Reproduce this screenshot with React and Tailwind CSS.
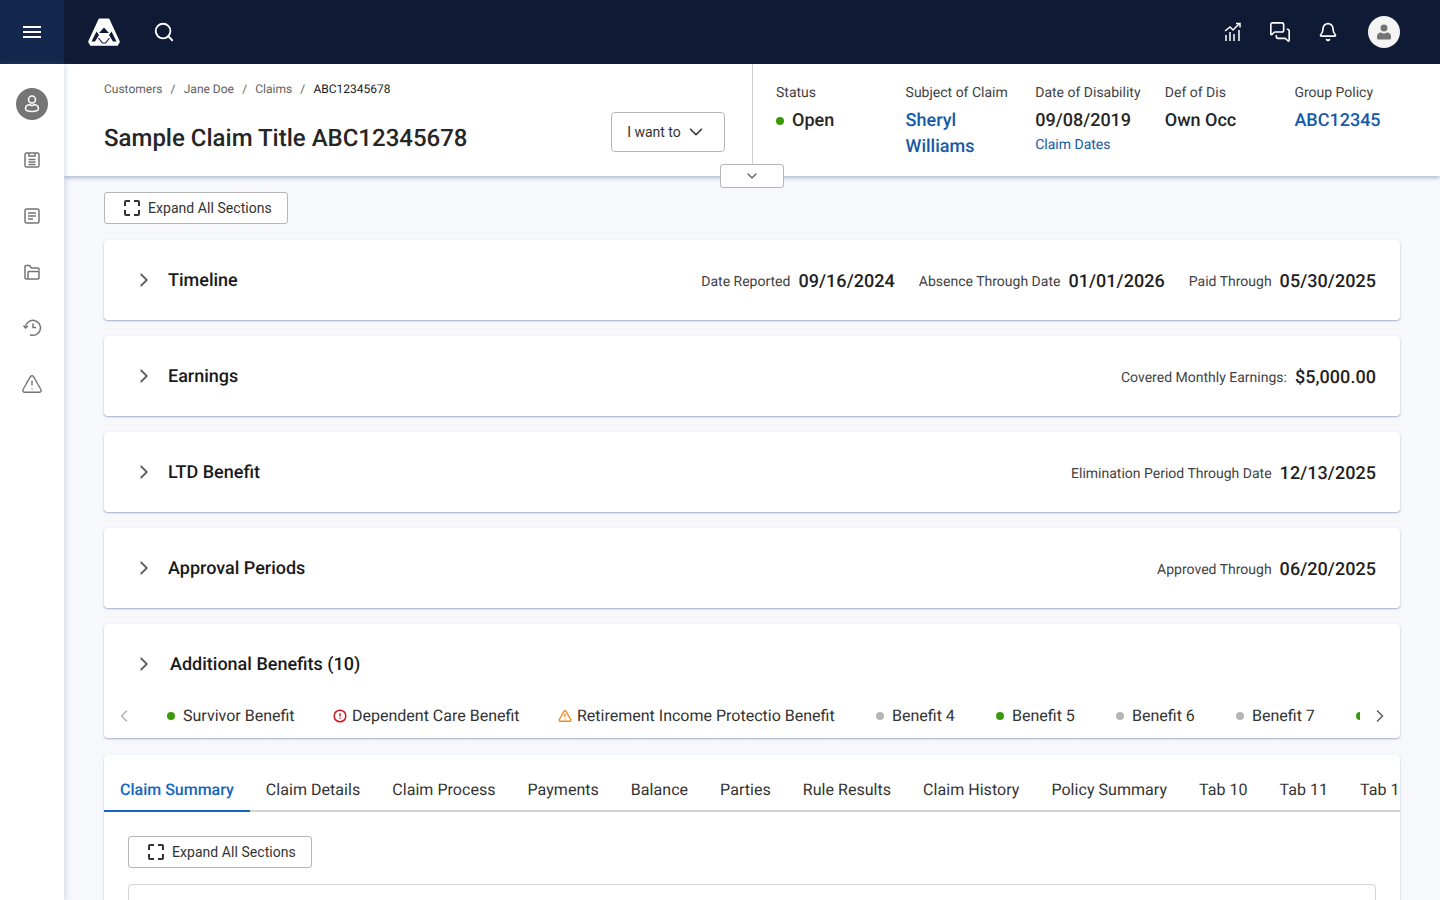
import React from 'react';
import { Search, ChevronRight, ChevronLeft, ChevronDown, MessagesSquare, Bell, TriangleAlert, CircleAlert } from 'lucide-react';

const font = { fontFamily: 'Roboto, sans-serif' };

const Logo = () => (
  <svg width="32" height="28" viewBox="0 0 32 28">
    <path d="M11.500.5h9a1 1 0 0 1 .9.5l10.300 22.300a1 1 0 0 1 0 .9l-1.700 3.100a1 1 0 0 1-.9.5H3a1 1 0 0 1-.9-.5L.3 24.200a1 1 0 0 1 0-.9L10.600 1a1 1 0 0 1 .9-.5z" fill="#fff" />
    <path d="M16 9.500 11 15h10z" fill="#0f1b35" />
    <path d="M8.500 13.500 3.500 23.500H7L11 17z" fill="#0f1b35" />
    <path d="M23.500 13.500 28.500 23.500H25L21 17z" fill="#0f1b35" />
    <path d="M10.500 20l4 5h3l4-5" fill="none" stroke="#0f1b35" strokeWidth="1.200" />
  </svg>
);

const MenuIcon = () => (
  <svg width="24" height="24" viewBox="0 0 24 24" fill="none" stroke="#fff" strokeWidth="2">
    <path d="M3 7h18M3 12h18M3 17h18" />
  </svg>
);

const ChartIcon = () => (
  <svg width="18" height="20" viewBox="0 0 18 20" fill="none" stroke="#fff" strokeWidth="1.5">
    <path d="M1 9l5-4 3 3 6-6" />
    <path d="M12 1.500h4v4" />
    <path d="M2 13v6M6 10v9M10 12v7M15 8v11" />
  </svg>
);

const UserGlyph = () => (
  <svg width="14" height="16" viewBox="0 0 14 16" fill="#757575">
    <circle cx="7" cy="4" r="3.500" />
    <path d="M0 14v-2c0-2 2-3.500 4-3.500.8.700 1.900 1 3 1s2.200-.3 3-1c2 0 4 1.500 4 3.500v2c0 .8-.6 1.500-1.500 1.500h-11C.6 15.500 0 14.800 0 14z" />
  </svg>
);

const ProfileOutline = () => (
  <svg width="16" height="20" viewBox="0 0 16 20" fill="none" stroke="#fff" strokeWidth="1.500">
    <circle cx="8" cy="5.500" r="3.500" />
    <path d="M5.500 10.500C3 11 1.500 12.500 1.500 14.500c0 2 2 3 6.500 3s6.500-1 6.500-3c0-2-1.500-3.500-4-4-.8.800-1.500 1-2.500 1s-1.700-.2-2.500-1z" />
  </svg>
);

const ClipboardIcon = () => (
  <svg width="18" height="18" viewBox="0 0 18 18" fill="none" stroke="#757575" strokeWidth="1.500">
    <rect x="2" y="2" width="14" height="14" rx="1.500" />
    <path d="M6 2v3h6V2M5.500 8.500h7M5.500 11h7M5.500 13.500h7" />
  </svg>
);

const NoteIcon = () => (
  <svg width="18" height="18" viewBox="0 0 18 18" fill="none" stroke="#757575" strokeWidth="1.500">
    <rect x="2" y="2" width="14" height="14" rx="1.500" />
    <path d="M5 6h8M5 9h8M5 12h5" />
  </svg>
);

const FolderIcon = () => (
  <svg width="18" height="16" viewBox="0 0 18 16" fill="none" stroke="#757575" strokeWidth="1.500">
    <path d="M2 14V2.500a1 1 0 0 1 1-1h3.500l2 2.500H15a1 1 0 0 1 1 1v1.500" />
    <path d="M2 14a1 1 0 0 0 1 1h12a1 1 0 0 0 1-1V7.500H6a1 1 0 0 0-1 1V15" />
  </svg>
);

const ClockBackIcon = () => (
  <svg width="20" height="20" viewBox="0 0 20 20" fill="none" stroke="#757575" strokeWidth="1.500">
    <path d="M3.500 9.500A7.500 7.500 0 1 1 8 16.700" />
    <path d="M1.500 7.500l2 2.500 2.500-2" />
    <path d="M11 5.500v4h3" />
  </svg>
);

const ExpandIcon = () => (
  <svg width="18" height="18" viewBox="0 0 18 18" fill="none" stroke="#333" strokeWidth="2">
    <path d="M7 2H3a1 1 0 0 0-1 1v4M11 2h4a1 1 0 0 1 1 1v4M7 16H3a1 1 0 0 1-1-1v-4M11 16h4a1 1 0 0 0 1-1v-4" />
  </svg>
);

const ExpandButton = () => (
  <button className="flex h-8 w-[184px] items-center gap-[7px] rounded-[3px] border border-[#b5b5b5] bg-white pl-[18px] text-sm tracking-[0.05px] text-[#333]">
    <ExpandIcon />
    Expand All Sections
  </button>
);

const Meta = ({ label, value }) => (
  <div className="flex items-center pt-1">
    <span className="text-sm text-[#424242]">{label}</span>
    <span className="ml-[8px] text-lg font-medium tracking-[0.05px] text-[#1f1f1f]">{value}</span>
  </div>
);

const Section = ({ title, meta }) => (
  <div className="flex h-20 items-center rounded bg-white pr-6 pl-[29px] shadow-[0_1px_2px_rgba(90,110,150,0.55)]">
    <ChevronRight size={22} strokeWidth={2} className="text-[#616161]" />
    <h2 className="ml-[13px] pt-px text-lg font-medium text-[#1a1a1a]">{title}</h2>
    <div className="ml-auto flex items-center gap-6">
      {meta.map((m) => (
        <Meta key={m.label} label={m.label} value={m.value} />
      ))}
    </div>
  </div>
);

const Dot = ({ color }) => <span className={`h-2 w-2 rounded-full ${color}`} />;

const benefits = [
  { name: 'Survivor Benefit', icon: <Dot color="bg-[#3b9a0c]" />, w: 'w-[167px]' },
  { name: 'Dependent Care Benefit', icon: <CircleAlert size={14} strokeWidth={2.5} className="-mr-[3px] -ml-px text-[#d8121f]" />, w: 'w-[225px]' },
  { name: 'Retirement Income Protectio Benefit', icon: <TriangleAlert size={14} strokeWidth={2.25} className="-mr-[3px] -ml-px text-[#f08a24]" />, w: 'w-[317px]' },
  { name: 'Benefit 4', icon: <Dot color="bg-[#b5b5b5]" />, w: 'w-[120px]' },
  { name: 'Benefit 5', icon: <Dot color="bg-[#3b9a0c]" />, w: 'w-[120px]' },
  { name: 'Benefit 6', icon: <Dot color="bg-[#b5b5b5]" />, w: 'w-[120px]' },
  { name: 'Benefit 7', icon: <Dot color="bg-[#b5b5b5]" />, w: 'w-[120px]' },
];

const tabs = ['Claim Details', 'Claim Process', 'Payments', 'Balance', 'Parties', 'Rule Results', 'Claim History', 'Policy Summary', 'Tab 10', 'Tab 11', 'Tab 12'];

const railIcons = [<ClipboardIcon />, <NoteIcon />, <FolderIcon />, <ClockBackIcon />, <TriangleAlert size={22} strokeWidth={1.5} className="text-[#757575]" />];

export default function App() {
  return (
    <div style={font} className="flex h-screen w-full flex-col overflow-hidden bg-[#f6f8fc] antialiased [text-rendering:geometricPrecision]">
      <header className="flex h-16 shrink-0 items-center bg-[#0f1b35]">
        <div className="flex h-16 w-16 items-center justify-center bg-[#14274c]">
          <MenuIcon />
        </div>
        <div className="ml-6 flex"><Logo /></div>
        <Search size={22} strokeWidth={2} className="ml-[33px] text-white" />
        <div className="ml-auto flex items-center pr-10">
          <ChartIcon />
          <MessagesSquare size={22} strokeWidth={1.75} className="ml-[27px] text-white" />
          <Bell size={20} strokeWidth={2} className="ml-[27px] text-white" />
          <div className="ml-[30px] flex h-8 w-8 items-center justify-center rounded-full bg-[#f5f5f5]">
            <UserGlyph />
          </div>
        </div>
      </header>

      <div className="flex min-h-0 flex-1">
        <aside className="z-20 flex w-16 shrink-0 flex-col items-center bg-white pt-3 shadow-[1px_0_6px_rgba(90,110,150,0.25)]">
          <div className="flex h-14 items-center">
            <div className="flex h-8 w-8 items-center justify-center rounded-full bg-[#757575]">
              <ProfileOutline />
            </div>
          </div>
          {railIcons.map((icon, i) => (
            <div key={i} className="flex h-14 items-center">{icon}</div>
          ))}
        </aside>

        <main className="min-w-0 flex-1">
          <section className="relative z-10 flex h-28 bg-white shadow-[0_2px_4px_rgba(90,110,150,0.45)]">
            <div className="w-[689px] border-r border-[#cfcfcf] pr-[27px] pl-10">
              <nav className="flex h-12 items-center pt-[2px] text-xs text-[#616161]">
                <span>Customers</span>
                <span className="mx-[8.2px]">/</span>
                <span>Jane Doe</span>
                <span className="mx-[8.2px]">/</span>
                <span>Claims</span>
                <span className="mx-[8.2px]">/</span>
                <span className="text-[#1a1a1a]">ABC12345678</span>
              </nav>
              <div className="flex items-start justify-between">
                <h1 className="mt-[10px] text-2xl font-medium text-[#262626]">Sample Claim Title ABC12345678</h1>
                <button className="flex h-10 w-[114px] items-center justify-center gap-1 rounded border border-[#b5b5b5] pr-[2px] text-sm text-[#333]">
                  I want to
                  <ChevronDown size={22} strokeWidth={1.75} />
                </button>
              </div>
            </div>
            <div className="grid flex-1 grid-cols-5 pt-5 pr-4 pl-[23px]">
              <div>
                <p className="text-sm leading-[18px] text-[#424242]">Status</p>
                <p className="mt-[6px] flex items-center gap-2 text-lg leading-[26px] font-medium text-[#262626]"><Dot color="bg-[#3b9a0c]" />Open</p>
              </div>
              <div>
                <p className="text-sm leading-[18px] text-[#424242]">Subject of Claim</p>
                <p className="mt-[6px] text-lg leading-[26px] font-medium text-[#155aa8]">Sheryl<br />Williams</p>
              </div>
              <div>
                <p className="text-sm leading-[18px] text-[#424242]">Date of Disability</p>
                <p className="mt-[6px] text-lg leading-[26px] font-medium text-[#262626]">09/08/2019</p>
                <p className="mt-px text-sm leading-[20px] text-[#155aa8]">Claim Dates</p>
              </div>
              <div>
                <p className="text-sm leading-[18px] text-[#424242]">Def of Dis</p>
                <p className="mt-[6px] text-lg leading-[26px] font-medium text-[#262626]">Own Occ</p>
              </div>
              <div>
                <p className="text-sm leading-[18px] text-[#424242]">Group Policy</p>
                <p className="mt-[6px] text-lg leading-[26px] font-medium text-[#155aa8]">ABC12345</p>
              </div>
            </div>
            <button className="absolute top-[100px] left-[656px] flex h-[24px] w-16 items-center justify-center rounded-[3px] border border-[#b5b5b5] bg-white text-[#616161]">
              <ChevronDown size={16} strokeWidth={2} />
            </button>
          </section>

          <div className="flex flex-col px-10 pt-4">
            <ExpandButton />
            <div className="mt-4 flex flex-col gap-4">
              <Section title="Timeline" meta={[
                { label: 'Date Reported', value: '09/16/2024' },
                { label: 'Absence Through Date', value: '01/01/2026' },
                { label: 'Paid Through', value: '05/30/2025' },
              ]} />
              <Section title="Earnings" meta={[{ label: 'Covered Monthly Earnings:', value: '$5,000.00' }]} />
              <Section title="LTD Benefit" meta={[{ label: 'Elimination Period Through Date', value: '12/13/2025' }]} />
              <Section title="Approval Periods" meta={[{ label: 'Approved Through', value: '06/20/2025' }]} />

              <div className="h-[114px] rounded bg-white shadow-[0_1px_2px_rgba(90,110,150,0.55)]">
                <div className="flex h-20 items-center pl-[29px]">
                  <ChevronRight size={22} strokeWidth={2} className="text-[#616161]" />
                  <h2 className="ml-[15px] pt-px text-lg font-medium text-[#1a1a1a]">Additional Benefits (10)</h2>
                </div>
                <div className="flex h-6 items-center">
                  <ChevronLeft size={20} strokeWidth={2} className="ml-[10px] shrink-0 text-[#b5b5b5]" />
                  <div className="ml-[33px] flex w-[1193px] overflow-hidden">
                    {benefits.map((b) => (
                      <div key={b.name} className={`flex shrink-0 items-center gap-2 text-base text-[#333] ${b.w}`}>
                        {b.icon}
                        {b.name}
                      </div>
                    ))}
                    <Dot color="bg-[#3b9a0c] shrink-0 self-center" />
                  </div>
                  <ChevronRight size={20} strokeWidth={2} className="ml-[10px] shrink-0 text-[#616161]" />
                </div>
              </div>
            </div>

            <div className="mt-[17px] h-[400px] rounded bg-white shadow-[0_1px_2px_rgba(90,110,150,0.4)]">
              <div className="flex h-[57px] overflow-hidden">
                <div className="flex shrink-0 items-center border-b-2 border-[#1565c0] px-4 pt-[15px] text-base font-medium text-[#1565c0]">Claim Summary</div>
                {tabs.map((t) => (
                  <div key={t} className="flex shrink-0 items-center border-b-2 border-[#d4d4d4] px-4 pt-[15px] text-base tracking-[0.04px] text-[#333]">{t}</div>
                ))}
              </div>
              <div className="px-6 pt-6">
                <ExpandButton />
                <div className="mt-4 h-40 rounded border border-[#d4d4d4]" />
              </div>
            </div>
          </div>
        </main>
      </div>
    </div>
  );
}
